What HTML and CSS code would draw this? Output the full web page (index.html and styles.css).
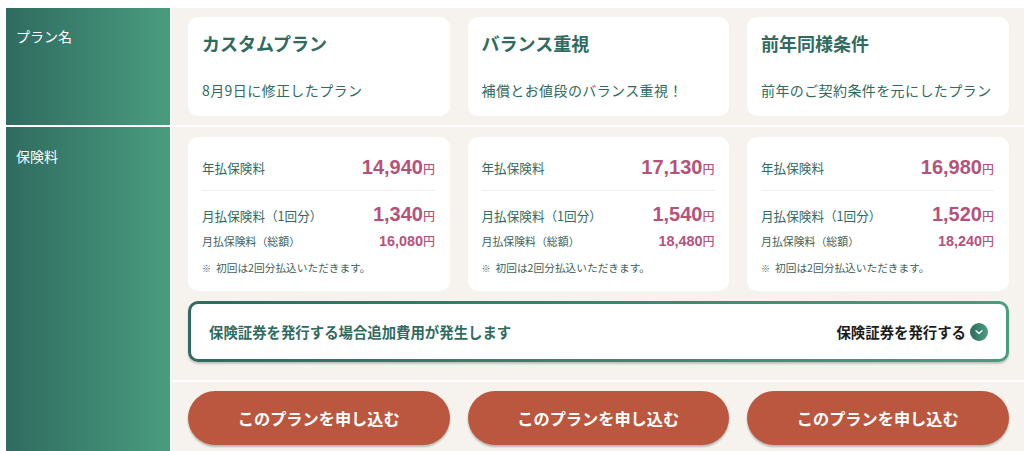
FILE: index.html
```html
<!DOCTYPE html>
<html lang="ja">
<head>
<meta charset="utf-8">
<title>プラン比較</title>
<link rel="stylesheet" href="styles.css">
</head>
<body>
<div class="table">
  <div class="head head-name">プラン名</div>
  <div class="cell cell-name">
    <div class="cols">
      <div class="card name-card"><h2>カスタムプラン</h2><p>8月9日に修正したプラン</p></div>
      <div class="card name-card"><h2>バランス重視</h2><p>補償とお値段のバランス重視！</p></div>
      <div class="card name-card"><h2>前年同様条件</h2><p>前年のご契約条件を元にしたプラン</p></div>
    </div>
  </div>
  <div class="head head-price">保険料</div>
  <div class="cell cell-price">
    <div class="cols">
      <div class="card price-card">
        <div class="line line-year"><span class="lab">年払保険料</span><span class="amt big">14,940<small>円</small></span></div>
        <div class="line line-month"><span class="lab">月払保険料（1回分）</span><span class="amt big">1,340<small>円</small></span></div>
        <div class="line line-total"><span class="lab-s">月払保険料（総額）</span><span class="amt mid">16,080<small>円</small></span></div>
        <p class="note"><span class="mark">※</span>初回は2回分払込いただきます。</p>
      </div>
      <div class="card price-card">
        <div class="line line-year"><span class="lab">年払保険料</span><span class="amt big">17,130<small>円</small></span></div>
        <div class="line line-month"><span class="lab">月払保険料（1回分）</span><span class="amt big">1,540<small>円</small></span></div>
        <div class="line line-total"><span class="lab-s">月払保険料（総額）</span><span class="amt mid">18,480<small>円</small></span></div>
        <p class="note"><span class="mark">※</span>初回は2回分払込いただきます。</p>
      </div>
      <div class="card price-card">
        <div class="line line-year"><span class="lab">年払保険料</span><span class="amt big">16,980<small>円</small></span></div>
        <div class="line line-month"><span class="lab">月払保険料（1回分）</span><span class="amt big">1,520<small>円</small></span></div>
        <div class="line line-total"><span class="lab-s">月払保険料（総額）</span><span class="amt mid">18,240<small>円</small></span></div>
        <p class="note"><span class="mark">※</span>初回は2回分払込いただきます。</p>
      </div>
    </div>
    <div class="issue">
      <span class="issue-text">保険証券を発行する場合追加費用が発生します</span>
      <span class="issue-action">保険証券を発行する
        <svg class="chev" width="18" height="18" viewBox="0 0 18 18" aria-hidden="true"><defs><linearGradient id="g" x1="0" x2="1" y1="0" y2="0"><stop offset="0" stop-color="#2f6b60"/><stop offset="1" stop-color="#4a9d7f"/></linearGradient></defs><circle cx="9" cy="9" r="9" fill="url(#g)"/><path d="M6 7.8 9 10.6 12 7.8" fill="none" stroke="#fff" stroke-width="1.3" stroke-linecap="round" stroke-linejoin="round"/></svg>
      </span>
    </div>
  </div>
  <div class="cell cell-apply">
    <div class="cols">
      <a class="apply">このプランを申し込む</a>
      <a class="apply">このプランを申し込む</a>
      <a class="apply">このプランを申し込む</a>
    </div>
  </div>
</div>
</body>
</html>
```

FILE: styles.css
```css
* { box-sizing: border-box; }
html, body { height: 451px; overflow: hidden; }
body {
  margin: 0;
  padding: 8px 0 0 6px;
  background: #fff;
  font-family: "Noto Sans CJK JP", "Noto Sans", sans-serif;
  color: #2f6b60;
}
.table {
  display: grid;
  grid-template-columns: 164px 1fr;
  grid-template-rows: 117px 253px 80px;
  column-gap: 1px;
  row-gap: 2px;
}
.head {
  background: linear-gradient(90deg, #2f6b60, #4a9d7f);
  color: #fff;
  font-size: 14px;
  line-height: 20px;
  padding: 18px 0 0 10px;
}
.head-price { grid-row: 2 / span 2; grid-column: 1; padding-top: 19px; }
.cell { background: #f6f3ee; padding: 9px 15px 0 17px; }
.cell-price { padding-top: 10px; }
.cols {
  display: grid;
  grid-template-columns: repeat(3, 261.5px);
  column-gap: 18px;
}
.card { background: #fff; border-radius: 10px; }
.name-card { height: 99px; padding: 14px 14px 0; }
.name-card h2 {
  margin: 0;
  font-size: 18px;
  line-height: 24px;
  font-weight: 700;
}
.name-card p {
  margin: 25px 0 0;
  font-size: 14px;
  line-height: 20px;
  letter-spacing: 0.4px;
}
.price-card { height: 154px; padding: 0 14.5px 0 14px; }
.line { display: flex; justify-content: space-between; align-items: baseline; }
.line-year { height: 54px; padding-top: 8px; align-items: center; border-bottom: 1px solid #f0eeea; }
.line-month { margin-top: 12px; height: 26px; }
.line-total { margin-top: 3px; height: 22px; }
.lab { font-size: 12.6px; line-height: 20px; }
.lab-s { font-size: 10.9px; line-height: 18px; color: #3f5f58; }
.amt { font-family: "Liberation Sans", "Noto Sans CJK JP", sans-serif; font-weight: 700; color: #b5527a; }
.amt small { font-family: "Noto Sans CJK JP", sans-serif; font-size: 12px; font-weight: 500; }
.big { font-size: 20px; }
.mid { font-size: 14.4px; }
.note {
  margin: 6px 0 0;
  font-size: 10.7px;
  line-height: 16px;
  color: #3f5f58;
}
.mark { margin-right: 5px; font-size: 9px; font-weight: 700; }
.issue {
  margin-top: 10px;
  width: 821px;
  height: 61px;
  border: 3px solid transparent;
  background:
    linear-gradient(#fff, #fff) padding-box,
    linear-gradient(90deg, #2f6b60, #4a9d7f) border-box;
  border-radius: 10px;
  display: flex;
  align-items: center;
  justify-content: space-between;
  padding: 0 18px;
  box-shadow: 0 2px 2px rgba(0, 0, 0, 0.2);
}
.issue-text { font-size: 14.4px; font-weight: 700; }
.issue-action { display: flex; align-items: center; gap: 4px; font-size: 14.4px; font-weight: 700; color: #1c1c1c; }
.cell-apply { padding-top: 9px; }
.apply {
  display: flex;
  align-items: center;
  justify-content: center;
  height: 54px;
  border-radius: 27px;
  background: #bb573f;
  color: #fff;
  font-size: 16.2px;
  font-weight: 700;
  box-shadow: 0 2px 2px rgba(0, 0, 0, 0.25);
}
```
